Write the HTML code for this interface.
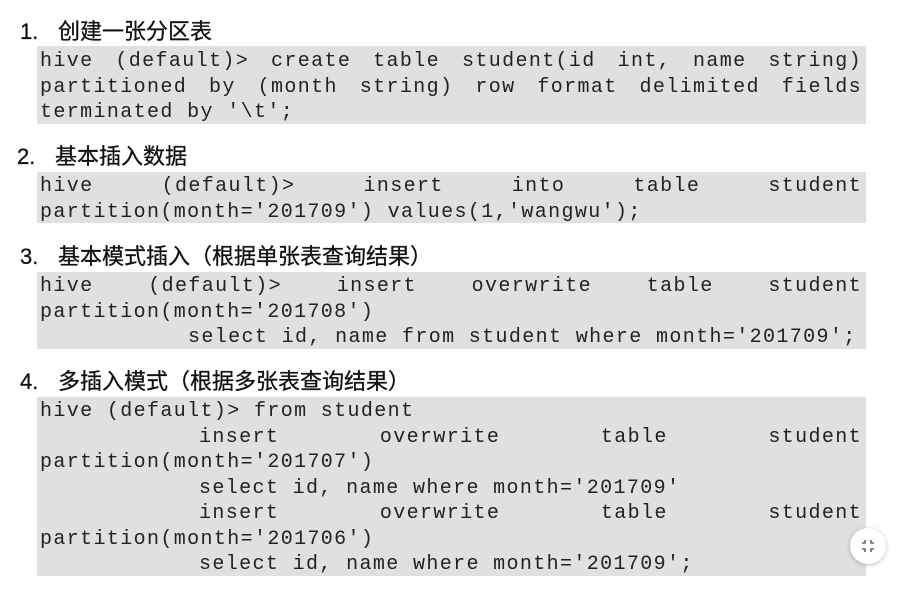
<!DOCTYPE html>
<html><head><meta charset="utf-8"><style>
body{margin:0;background:#fff;width:920px;height:591px;overflow:hidden;position:relative;font-family:"Liberation Sans","Noto Sans CJK SC",sans-serif;}
h{position:absolute;font-size:22px;color:#111;line-height:24px;white-space:nowrap;-webkit-text-stroke:0.3px #111}
h b{font-weight:normal;display:inline-block;width:38px}
.b{position:absolute;left:37px;width:829px;background:#e0e0e0;font-family:"Liberation Mono",monospace;font-size:20px;letter-spacing:1.37px;line-height:25.5px;color:#222;box-sizing:border-box;padding-left:3px;padding-right:4px}
.b div{white-space:pre;height:25.5px}
.j{text-align:justify;text-align-last:justify;white-space:normal!important}
.btn{position:absolute;left:850px;top:528px;width:36px;height:36px;border-radius:50%;background:#fff;box-shadow:0 1px 5px rgba(0,0,0,.25)}
</style></head><body>
<h style="left:20px;top:20px"><b>1.</b>创建一张分区表</h>
<div class="b" style="top:46px;height:78px;padding-top:3px">
<div class="j">hive (default)&gt; create table student(id int, name string)</div>
<div class="j">partitioned by (month string) row format delimited fields</div>
<div>terminated by '\t';</div>
</div>
<h style="left:17px;top:145px"><b>2.</b>基本插入数据</h>
<div class="b" style="top:172px;height:51px;padding-top:2px">
<div class="j">hive (default)&gt; insert into table student</div>
<div>partition(month='201709') values(1,'wangwu');</div>
</div>
<h style="left:20px;top:245px"><b>3.</b>基本模式插入（根据单张表查询结果）</h>
<div class="b" style="top:272px;height:77px;padding-top:2px">
<div class="j">hive (default)&gt; insert overwrite table student</div>
<div>partition(month='201708')</div>
<div style="padding-left:148px">select id, name from student where month='201709';</div>
</div>
<h style="left:20px;top:370px"><b>4.</b>多插入模式（根据多张表查询结果）</h>
<div class="b" style="top:397px;height:179px;padding-top:2px">
<div>hive (default)&gt; from student</div>
<div class="j" style="padding-left:159px">insert overwrite table student</div>
<div>partition(month='201707')</div>
<div style="padding-left:159px">select id, name where month='201709'</div>
<div class="j" style="padding-left:159px">insert overwrite table student</div>
<div>partition(month='201706')</div>
<div style="padding-left:159px">select id, name where month='201709';</div>
</div>
<div class="btn"><svg width="36" height="36" viewBox="0 0 36 36"><path d="M15 12v3h-3M21 12v3h3M15 24v-3h-3M21 24v-3h3" stroke="#666" stroke-width="1.6" fill="none"/></svg></div>
</body></html>
